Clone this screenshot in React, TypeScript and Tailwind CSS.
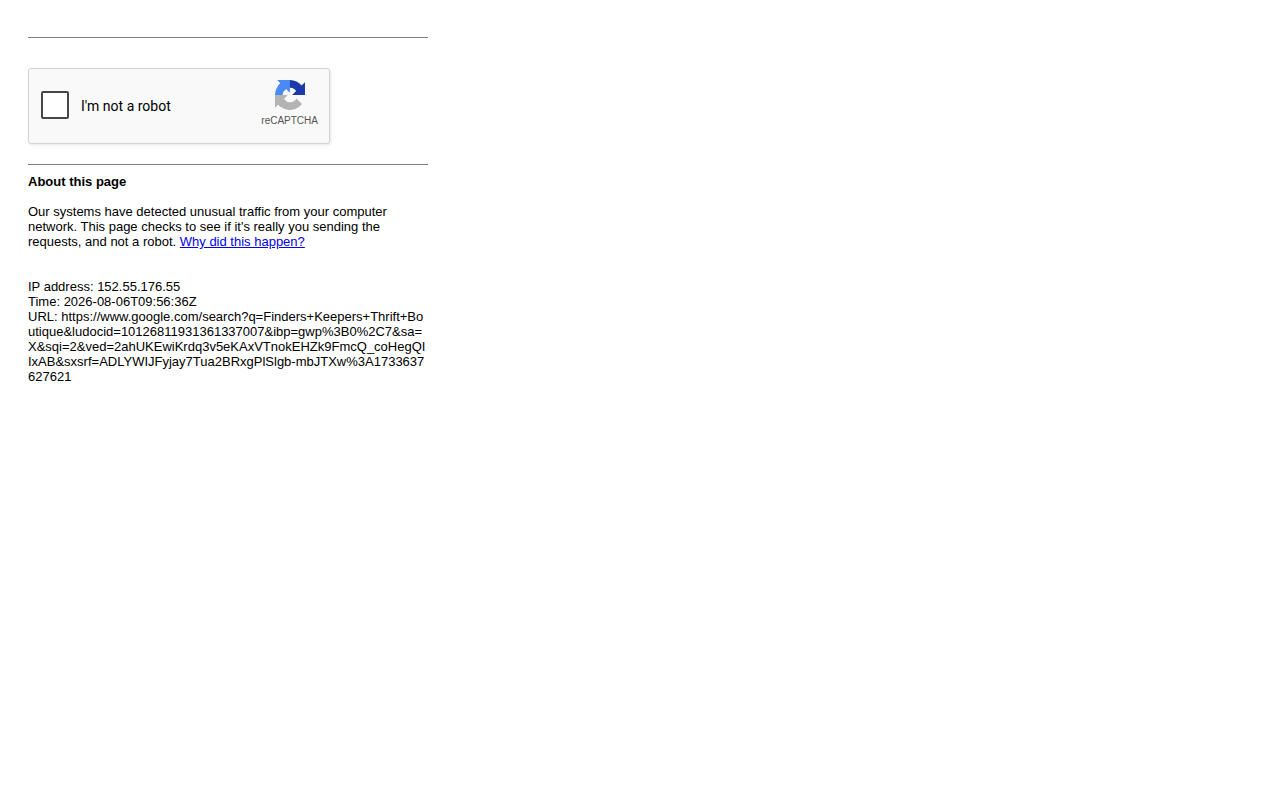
function RecaptchaLogo() {
  return (
    <svg viewBox="0 0 64 64" className="size-[30px]" aria-hidden="true">
      <path
        fill="#1c3aa9"
        d="M64 31.955l-.033-1.37V4.687l-7.16 7.16C50.948 4.674 42.033.093 32.05.093c-10.4 0-19.622 4.96-25.458 12.64l11.736 11.86a15.55 15.55 0 0 1 4.754-5.334c2.05-1.6 4.952-2.906 8.968-2.906.485 0 .86.057 1.135.163 4.976.393 9.288 3.14 11.828 7.124l-8.307 8.307L64 31.953"
      />
      <path
        fill="#4a8af4"
        d="M31.862.094l-1.37.033H4.594l7.16 7.16C4.58 13.147 0 22.06 0 32.046c0 10.4 4.96 19.622 12.64 25.458L24.5 45.768a15.55 15.55 0 0 1-5.334-4.754c-1.6-2.05-2.906-4.952-2.906-8.968 0-.485.057-.86.163-1.135.393-4.976 3.14-9.288 7.124-11.828l8.307 8.307L31.86.095"
      />
      <path
        fill="#b4b4b4"
        d="M.001 32.045l.033 1.37v25.898l7.16-7.16c5.86 7.173 14.774 11.754 24.76 11.754 10.4 0 19.622-4.96 25.458-12.64l-11.736-11.86a15.55 15.55 0 0 1-4.754 5.334c-2.05 1.6-4.952 2.906-8.968 2.906-.485 0-.86-.057-1.135-.163-4.976-.393-9.288-3.14-11.828-7.124l8.307-8.307c-10.522.04-22.4.066-27.295-.005"
      />
    </svg>
  );
}

function RecaptchaBox() {
  return (
    <form className="flex h-[76px] w-[302px] max-w-full justify-between rounded-[3px] border border-[#d3d3d3] bg-[#f9f9f9] pr-[11px] pl-3 shadow-[1px_1px_3px_rgba(0,0,0,0.10)]">
      <div className="flex items-center gap-3 pb-0.5">
        <input
          id="not-a-robot"
          type="checkbox"
          className="size-7 appearance-none rounded-[2px] border-2 border-[#474747] bg-white checked:bg-[#4285f4]"
        />
        <label
          htmlFor="not-a-robot"
          className="pt-0.5 font-['Roboto',sans-serif] text-[14px] leading-[17px] text-black"
        >
          I'm not a robot
        </label>
      </div>
      <div className="flex flex-col items-center gap-[5px] pt-[11px]">
        <RecaptchaLogo />
        <span className="text-[10px] leading-3 text-[#555555]">reCAPTCHA</span>
      </div>
    </form>
  );
}

export default function App() {
  return (
    <main className="max-w-[456px] px-7 pt-[37px] font-['Liberation_Sans',Arial,sans-serif] text-[13px] leading-[15px] text-black">
      <hr className="border-[#808080]" />
      <div className="pt-[30px] pb-5">
        <RecaptchaBox />
      </div>
      <hr className="border-[#808080]" />
      <h1 className="mt-[9px] font-bold">About this page</h1>
      <p className="mt-[15px]">
        Our systems have detected unusual traffic from your computer network. This page checks to see if it's really
        you sending the requests, and not a robot.{" "}
        <a href="#why" className="text-[#0000ee] underline">
          Why did this happen?
        </a>
      </p>
      <p className="mt-[30px] break-all">
        IP address: 152.55.176.55
        <br />
        Time: 2026-08-06T09:56:36Z
        <br />
        {"URL: https://www.google.com/search?q=Finders+Keepers+Thrift+Boutique&ludocid=10126811931361337007&ibp=gwp%3B0%2C7&sa=X&sqi=2&ved=2ahUKEwiKrdq3v5eKAxVTnokEHZk9FmcQ_coHegQIIxAB&sxsrf=ADLYWIJFyjay7Tua2BRxgPlSlgb-mbJTXw%3A1733637627621"}
      </p>
    </main>
  );
}
